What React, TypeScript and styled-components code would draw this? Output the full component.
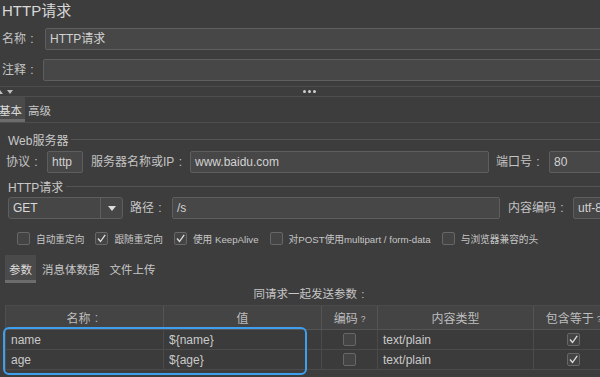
import React from "react";
import styled, { createGlobalStyle } from "styled-components";

const Global = createGlobalStyle`
  html, body {
    margin: 0;
    padding: 0;
    width: 600px;
    height: 377px;
    overflow: hidden;
    background: #3d3d3d;
  }
  body {
    font-family: "Liberation Sans", "Noto Sans CJK SC", sans-serif;
    color: #c8c8c8;
    font-size: 12px;
  }
  * { box-sizing: border-box; }
`;

const Page = styled.div`
  width: 620px;
  display: flex;
  flex-direction: column;
`;

const Title = styled.div`
  height: 28px;
  padding-left: 2px;
  font-size: 15px;
  line-height: 22px;
  color: #d8d8d8;
`;

const Row = styled.div<{ $mt?: number; $pl?: number }>`
  display: flex;
  align-items: center;
  height: 22px;
  margin-top: ${(p) => p.$mt ?? 0}px;
  padding-left: ${(p) => p.$pl ?? 0}px;
`;

const LabelBox = styled.div<{ $w: number; $ml?: number }>`
  flex-shrink: 0;
  width: ${(p) => p.$w}px;
  margin-left: ${(p) => p.$ml ?? 0}px;
  font-size: 12px;
  line-height: 22px;
  color: #c4c4c4;
  white-space: nowrap;
`;

const Colon = styled.span`
  display: inline-block;
  width: 1em;
  text-align: center;
  font-family: "Liberation Sans", sans-serif;
`;

const Label: React.FC<{ w: number; ml?: number; children: React.ReactNode }> = ({ w, ml, children }) => (
  <LabelBox $w={w} $ml={ml}>
    {children}
    <Colon>:</Colon>
  </LabelBox>
);

const Field = styled.div<{ $w?: number }>`
  height: 22px;
  ${(p) => (p.$w ? `width: ${p.$w}px; flex-shrink: 0;` : "flex: 1;")}
  background: #474747;
  border: 1px solid #5e5e5e;
  border-radius: 2px;
  padding-left: 4px;
  font-size: 12px;
  line-height: 20px;
  color: #d2d2d2;
  white-space: nowrap;
  overflow: hidden;
`;

const Splitter = styled.div`
  margin-top: 5px;
  height: 11px;
  border-top: 1px solid #4c4c4c;
  border-bottom: 1px solid #4e4e4e;
  display: flex;
  align-items: center;
`;

const Arrows = styled.div`
  display: flex;
  align-items: center;
  gap: 4px;
  margin-left: -3px;
  width: 18px;
`;

const Tri = styled.div<{ $up?: boolean }>`
  width: 0;
  height: 0;
  border-left: 3.5px solid transparent;
  border-right: 3.5px solid transparent;
  ${(p) =>
    p.$up
      ? "border-bottom: 4px solid #bdbdbd;"
      : "border-top: 4px solid #bdbdbd;"}
`;

const Grip = styled.div`
  margin-left: 288px;
  display: flex;
  gap: 2px;
`;

const Dot = styled.span`
  width: 3px;
  height: 3px;
  border-radius: 50%;
  background: #cfcfcf;
`;

const TabBar = styled.div<{ $mt?: number; $ml: number; $gap: number; $h: number; $line?: boolean }>`
  display: flex;
  height: ${(p) => p.$h}px;
  margin-top: ${(p) => p.$mt ?? 0}px;
  margin-left: ${(p) => p.$ml}px;
  gap: ${(p) => p.$gap}px;
  border-bottom: ${(p) => (p.$line ? "1px solid #4e4e4e" : "none")};
`;

const Tab = styled.div<{ $active?: boolean; $pad: number }>`
  display: flex;
  align-items: center;
  padding: 3px ${(p) => p.$pad}px 0;
  font-size: 11.5px;
  color: ${(p) => (p.$active ? "#dcdcdc" : "#c6c6c6")};
  background: ${(p) => (p.$active ? "#4a4a4a" : "transparent")};
  border-bottom: 3px solid ${(p) => (p.$active ? "#6c6c6c" : "transparent")};
  white-space: nowrap;
`;

const Legend = styled.div<{ $mt: number }>`
  display: flex;
  align-items: center;
  height: 14px;
  margin-top: ${(p) => p.$mt}px;
  padding-left: 8px;
  font-size: 12px;
  color: #c8c8c8;
  white-space: nowrap;
  &::after {
    content: "";
    flex: 1;
    height: 1px;
    margin-left: 3px;
    background: #545454;
  }
`;

const Select = styled.div`
  width: 115px;
  height: 22px;
  flex-shrink: 0;
  display: flex;
  background: #464646;
  border: 1px solid #5e5e5e;
  border-radius: 3px;
  margin-left: 8px;
`;

const SelectText = styled.div`
  flex: 1;
  padding-left: 4px;
  font-size: 12px;
  line-height: 20px;
  color: #dadada;
`;

const SelectButton = styled.div`
  width: 22px;
  border-left: 1px solid #5e5e5e;
  display: flex;
  align-items: center;
  justify-content: center;
  &::after {
    content: "";
    border-left: 4px solid transparent;
    border-right: 4px solid transparent;
    border-top: 5px solid #dcdcdc;
  }
`;

const Checks = styled.div`
  display: flex;
  align-items: center;
  height: 13px;
  margin-top: 13px;
  padding-left: 17px;
  gap: 11px;
`;

const CheckItem = styled.div`
  display: flex;
  align-items: center;
  gap: 6px;
  font-size: 9.7px;
  color: #c6c6c6;
  white-space: nowrap;
`;

const Box = styled.div`
  width: 13px;
  height: 13px;
  flex-shrink: 0;
  border: 1px solid #676767;
  border-radius: 2px;
  background: #444444;
  display: flex;
  align-items: center;
  justify-content: center;
`;

const Check: React.FC<{ on?: boolean }> = ({ on }) => (
  <Box>
    {on && (
      <svg width="11" height="11" viewBox="0 0 11 11">
        <path d="M2 5.5 L4.5 8.5 L9.2 1.8" fill="none" stroke="#dedede" strokeWidth="1.3" />
      </svg>
    )}
  </Box>
);

const Heading = styled.div`
  margin-top: 4px;
  height: 14px;
  width: 622px;
  text-align: center;
  font-size: 11.5px;
  line-height: 14px;
  color: #c6c6c6;
`;

const TableWrap = styled.div`
  position: relative;
  margin-top: 4px;
  margin-left: 5px;
  width: 608px;
`;

const Grid = styled.div`
  display: grid;
  grid-template-columns: 158px 158px 56px 156px 80px;
  border-left: 1px solid #4f4f4f;
  border-top: 1px solid #4a4a4a;
`;

const Head = styled.div`
  height: 24px;
  background: #444444;
  border-right: 1px solid #555555;
  border-bottom: 1px solid #555555;
  display: flex;
  align-items: center;
  justify-content: center;
  font-size: 12px;
  color: #bdbdbd;
  white-space: nowrap;
`;

const Hint = styled.span`
  font-size: 8.5px;
  margin-left: 3px;
  margin-top: 3px;
`;

const Cell = styled.div<{ $center?: boolean }>`
  height: 20px;
  background: #3b3b3b;
  border-right: 1px solid #4b4b4b;
  border-bottom: 1px solid #4b4b4b;
  display: flex;
  align-items: center;
  justify-content: ${(p) => (p.$center ? "center" : "flex-start")};
  padding-left: ${(p) => (p.$center ? 0 : 5)}px;
  font-size: 12px;
  color: #cacaca;
  white-space: nowrap;
`;

const Highlight = styled.div`
  position: absolute;
  left: -2px;
  top: 22px;
  width: 304px;
  height: 48px;
  border: 2.5px solid #3d9fee;
  border-radius: 6px;
  pointer-events: none;
`;

const rows = [
  { name: "name", value: "${name}", type: "text/plain" },
  { name: "age", value: "${age}", type: "text/plain" },
];

export default function App() {
  return (
    <Page>
      <Global />
      <Title>HTTP请求</Title>
      <Row $pl={2}>
        <Label w={43}>名称</Label>
        <Field>HTTP请求</Field>
      </Row>
      <Row $mt={9} $pl={2}>
        <Label w={41}>注释</Label>
        <Field />
      </Row>
      <Splitter>
        <Arrows>
          <Tri $up />
          <Tri />
        </Arrows>
        <Grip>
          <Dot />
          <Dot />
          <Dot />
        </Grip>
      </Splitter>
      <TabBar $ml={-4} $gap={0} $h={26} $line>
        <Tab $active $pad={3}>基本</Tab>
        <Tab $pad={3}>高级</Tab>
      </TabBar>

      <Legend $mt={9}>Web服务器</Legend>
      <Row $mt={5} $pl={6}>
        <Label w={41}>协议</Label>
        <Field $w={36}>http</Field>
        <Label w={99} ml={8}>服务器名称或IP</Label>
        <Field $w={299}>www.baidu.com</Field>
        <Label w={53} ml={7}>端口号</Label>
        <Field $w={60}>80</Field>
      </Row>

      <Legend $mt={6}>HTTP请求</Legend>
      <Row $mt={4}>
        <Select>
          <SelectText>GET</SelectText>
          <SelectButton />
        </Select>
        <Label w={42} ml={7}>路径</Label>
        <Field $w={328}>/s</Field>
        <Label w={65} ml={8}>内容编码</Label>
        <Field $w={60}>utf-8</Field>
      </Row>

      <Checks>
        <CheckItem><Check />自动重定向</CheckItem>
        <CheckItem><Check on />跟随重定向</CheckItem>
        <CheckItem><Check on />使用 KeepAlive</CheckItem>
        <CheckItem><Check />对POST使用multipart / form-data</CheckItem>
        <CheckItem><Check />与浏览器兼容的头</CheckItem>
      </Checks>

      <TabBar $mt={10} $ml={5} $gap={2} $h={28}>
        <Tab $active $pad={4}>参数</Tab>
        <Tab $pad={4}>消息体数据</Tab>
        <Tab $pad={4}>文件上传</Tab>
      </TabBar>

      <Heading>同请求一起发送参数<Colon>:</Colon></Heading>
      <TableWrap>
        <Grid>
          <Head>名称<Colon>:</Colon></Head>
          <Head>值</Head>
          <Head>编码<Hint>?</Hint></Head>
          <Head>内容类型</Head>
          <Head>包含等于<Hint>?</Hint></Head>
          {rows.map((r) => (
            <React.Fragment key={r.name}>
              <Cell>{r.name}</Cell>
              <Cell>{r.value}</Cell>
              <Cell $center><Check /></Cell>
              <Cell>{r.type}</Cell>
              <Cell $center><Check on /></Cell>
            </React.Fragment>
          ))}
        </Grid>
        <Highlight />
      </TableWrap>
    </Page>
  );
}
